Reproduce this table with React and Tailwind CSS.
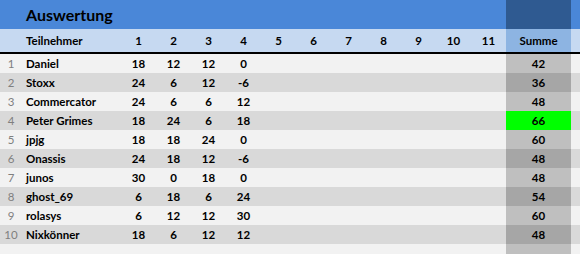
import React from "react";

const rows = [
  { name: "Daniel", scores: [18, 12, 12, 0], sum: 42 },
  { name: "Stoxx", scores: [24, 6, 12, -6], sum: 36 },
  { name: "Commercator", scores: [24, 6, 6, 12], sum: 48 },
  { name: "Peter Grimes", scores: [18, 24, 6, 18], sum: 66, best: true },
  { name: "jpjg", scores: [18, 18, 24, 0], sum: 60 },
  { name: "Onassis", scores: [24, 18, 12, -6], sum: 48 },
  { name: "junos", scores: [30, 0, 18, 0], sum: 48 },
  { name: "ghost_69", scores: [6, 18, 6, 24], sum: 54 },
  { name: "rolasys", scores: [6, 12, 12, 30], sum: 60 },
  { name: "Nixkönner", scores: [18, 6, 12, 12], sum: 48 },
];

const rounds = [1, 2, 3, 4, 5, 6, 7, 8, 9, 10, 11];
const cols = "grid grid-cols-[22px_99px_repeat(11,35px)_65px_9px]";

export default function App() {
  return (
    <div className="w-[580px] h-[254px] overflow-hidden bg-[#f2f2f2] text-black font-['Lato','Liberation_Sans',sans-serif]">
      {/* Title */}
      <div className={`${cols} h-[29px] bg-[#4a87d8]`}>
        <div />
        <div className="col-span-12 flex items-center pl-1 text-[16px] font-bold">Auswertung</div>
        <div className="bg-[#2f5a91]" />
        <div />
      </div>

      {/* Header */}
      <div className={`${cols} h-[25px] bg-[#c6d9f1] border-b-2 border-black text-[11.5px] font-bold`}>
        <div />
        <div className="flex items-center pl-1">Teilnehmer</div>
        {rounds.map((r) => (
          <div key={r} className="flex items-center justify-center">
            {r}
          </div>
        ))}
        <div className="flex items-center justify-center bg-[#8db4e2]">Summe</div>
        <div />
      </div>

      {/* Rows */}
      {rows.map((row, i) => {
        const even = i % 2 === 1;
        const sumBg = row.best ? "bg-[#00ff00]" : even ? "bg-[#a6a6a6]" : "bg-[#bfbfbf]";
        return (
          <div
            key={row.name}
            className={`${cols} h-[19px] text-[11.5px] font-bold ${even ? "bg-[#d9d9d9]" : "bg-[#f2f2f2]"}`}
          >
            <div className="flex items-center justify-center font-normal text-[#7f7f7f]">{i + 1}</div>
            <div className="flex items-center pl-1">{row.name}</div>
            {rounds.map((r) => (
              <div key={r} className="flex items-center justify-center">
                {row.scores[r - 1] ?? ""}
              </div>
            ))}
            <div className={`flex items-center justify-center ${sumBg}`}>{row.sum}</div>
            <div />
          </div>
        );
      })}

      <div className={`${cols} h-[10px]`}>
        <div className="col-span-13" />
        <div className="bg-[#bfbfbf]" />
        <div />
      </div>
    </div>
  );
}
